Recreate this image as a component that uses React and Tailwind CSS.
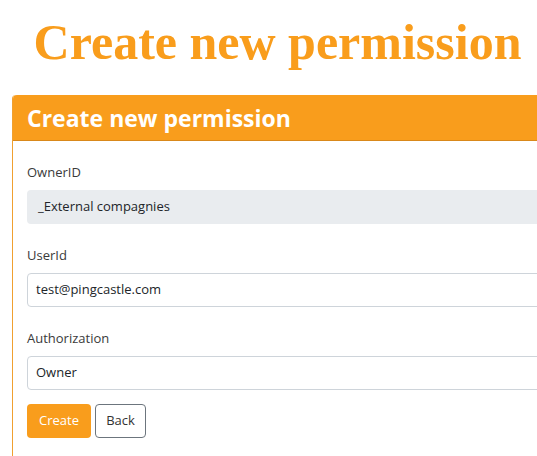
import React from 'react';

const Field = ({ label, value, disabled, last }) => (
  <div className={last ? 'mb-[14px]' : 'mb-[21px]'}>
    <label className="block text-[13px] leading-5 text-[#3a3a3a] mb-2">{label}</label>
    <div
      className={
        disabled
          ? 'h-[34px] flex items-center pl-[11px] text-[13px] text-[#212529] bg-[#e9ecef] rounded'
          : 'h-[34px] flex items-center pl-2 text-[13px] text-[#212529] bg-white border border-[#ced4da] rounded'
      }
    >
      {value}
    </div>
  </div>
);

export default function App() {
  return (
    <div className="w-[537px] h-[456px] overflow-hidden bg-white" style={{ fontFamily: '"Open Sans", "Noto Sans", Arial, sans-serif' }}>
      <div className="w-[555px]">
        <h1
          className="pt-[12px] h-[95px] text-center text-[50px] leading-[61px] font-bold text-[#f99d1c]"
          style={{ fontFamily: '"Liberation Serif", "Times New Roman", serif' }}
        >
          Create new permission
        </h1>

        <div className="ml-3 w-[600px] border-l border-[#f0a030] rounded-tl">
          <div className="h-[46px] bg-[#f99d1c] border-b border-[#d9881a] rounded-tl flex items-center pl-[14px] pt-[2px]">
            <h2 className="text-[23px] font-bold text-white leading-none">Create new permission</h2>
          </div>

          <div className="pt-[21px] pl-[14px] pb-6">
            <Field label="OwnerID" value="_External compagnies" disabled />
            <Field label="UserId" value="test@pingcastle.com" />
            <Field label="Authorization" value="Owner" last />
            <div className="flex gap-1">
              <button className="h-[34px] w-16 bg-[#f99d1c] text-white text-[13px] rounded">Create</button>
              <button className="h-[34px] w-[51px] bg-white text-[#333] text-[13px] border border-[#6c757d] rounded">Back</button>
            </div>
          </div>
        </div>
      </div>
    </div>
  );
}
